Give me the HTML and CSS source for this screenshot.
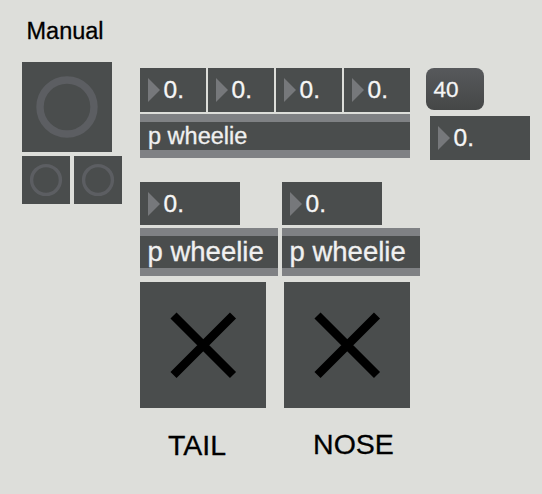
FILE: index.html
```html
<!DOCTYPE html>
<html>
<head>
<meta charset="utf-8">
<link rel="stylesheet" href="styles.css">
</head>
<body>
<div class="patch">
  <div class="left">
    <div class="manual">Manual</div>
    <div class="knob knob-big">
      <svg width="90" height="90" viewBox="0 0 90 90"><circle cx="45" cy="45" r="27" fill="none" stroke="#5c5e62" stroke-width="7.4"/></svg>
    </div>
    <div class="knob-row">
      <div class="knob knob-small">
        <svg width="48" height="48" viewBox="0 0 48 48"><circle cx="24" cy="24" r="14.4" fill="none" stroke="#5c5e62" stroke-width="3.4"/></svg>
      </div>
      <div class="knob knob-small">
        <svg width="48" height="48" viewBox="0 0 48 48"><circle cx="24" cy="24" r="14.4" fill="none" stroke="#5c5e62" stroke-width="3.4"/></svg>
      </div>
    </div>
  </div>

  <div class="right">
    <div class="row row-a">
      <div class="nums4">
        <div class="num n-top"><span class="tri"></span><span class="val">0.</span></div>
        <div class="num n-top"><span class="tri"></span><span class="val">0.</span></div>
        <div class="num n-top"><span class="tri"></span><span class="val">0.</span></div>
        <div class="num n-top"><span class="tri"></span><span class="val">0.</span></div>
      </div>
      <div class="msg">40</div>
    </div>

    <div class="row row-b">
      <div class="sub sub-wide"><div class="sub-body">p wheelie</div></div>
      <div class="num n-side"><span class="tri"></span><span class="val">0.</span></div>
    </div>

    <div class="row row-c">
      <div class="num n-low"><span class="tri"></span><span class="val">0.</span></div>
      <div class="num n-low"><span class="tri"></span><span class="val">0.</span></div>
    </div>

    <div class="row row-d">
      <div class="sub sub-big"><div class="sub-body">p wheelie</div></div>
      <div class="sub sub-big"><div class="sub-body">p wheelie</div></div>
    </div>

    <div class="row row-e">
      <div class="xbox">
        <svg width="126" height="126" viewBox="0 0 126 126"><path d="M33.5 33.5 L93 93 M93 33.5 L33.5 93" stroke="#000" stroke-width="8.6" fill="none"/></svg>
      </div>
      <div class="xbox">
        <svg width="126" height="126" viewBox="0 0 126 126"><path d="M33.5 33.5 L93 93 M93 33.5 L33.5 93" stroke="#000" stroke-width="8.6" fill="none"/></svg>
      </div>
    </div>

    <div class="row row-f">
      <span class="lbl lbl-tail">TAIL</span>
      <span class="lbl lbl-nose">NOSE</span>
    </div>
  </div>
</div>
</body>
</html>
```

FILE: styles.css
```css
html, body {
  margin: 0;
  padding: 0;
}
body {
  background: #dddeda;
  font-family: "Liberation Sans", Arial, sans-serif;
  width: 542px;
  height: 494px;
  overflow: hidden;
}
.patch {
  display: flex;
  align-items: flex-start;
  gap: 18px;
  padding-left: 22px;
}
.left {
  width: 100px;
  display: flex;
  flex-direction: column;
}
.manual {
  font-size: 23.5px;
  line-height: 26px;
  height: 26px;
  margin: 18px 0 0 4.5px;
  color: #000;
  -webkit-text-stroke: 0.3px #000;
}
.knob {
  background: #4a4d4d;
  display: flex;
}
.knob-big {
  width: 90px;
  height: 90px;
  margin-top: 18px;
}
.knob-row {
  display: flex;
  gap: 4px;
  margin-top: 4px;
}
.knob-small {
  width: 48px;
  height: 48px;
}
.right {
  display: flex;
  flex-direction: column;
  width: 400px;
}
.row {
  display: flex;
  align-items: flex-start;
}
.row-a {
  margin-top: 68px;
}
.nums4 {
  display: flex;
  gap: 2px;
}
.num {
  background: #4a4d4d;
  display: flex;
  align-items: center;
  color: #f6f6f6;
  box-sizing: border-box;
}
.tri {
  width: 0;
  height: 0;
  border-left: 12px solid #76787b;
  border-top: 12px solid transparent;
  border-bottom: 12px solid transparent;
  margin-left: 8px;
  flex: none;
}
.val {
  font-size: 24.5px;
  line-height: 44px;
  margin-left: 3.5px;
  -webkit-text-stroke: 0.3px #f6f6f6;
}
.n-top {
  width: 66px;
  height: 44px;
}
.msg {
  margin-left: 16px;
  width: 58px;
  height: 42px;
  border-radius: 8px;
  background: linear-gradient(#57595c, #454747);
  color: #f6f6f6;
  font-size: 22.5px;
  line-height: 44px;
  padding-left: 7.5px;
  box-sizing: border-box;
  -webkit-text-stroke: 0.3px #f6f6f6;
}
.row-b {
  margin-top: 2px;
}
.sub {
  background: #7f8184;
  padding: 8px 0;
  box-sizing: border-box;
}
.sub-body {
  background: #4a4d4d;
  color: #f0f0f0;
  padding-left: 8px;
  -webkit-text-stroke: 0.3px #f0f0f0;
  white-space: nowrap;
  overflow: hidden;
}
.sub-wide {
  width: 270px;
}
.sub-wide .sub-body {
  font-size: 23.5px;
  line-height: 28px;
  height: 28px;
}
.n-side {
  width: 100px;
  height: 44px;
  margin-left: 20px;
  margin-top: 2px;
}
.row-c {
  margin-top: 22px;
  gap: 42px;
}
.n-low {
  width: 100px;
  height: 43px;
}
.row-d {
  margin-top: 3px;
  gap: 4px;
}
.sub-big {
  width: 138px;
}
.sub-big .sub-body {
  font-size: 27.5px;
  line-height: 32px;
  height: 32px;
  padding-left: 7.5px;
}
.row-e {
  margin-top: 6px;
  gap: 18px;
}
.xbox {
  width: 126px;
  height: 126px;
  background: #4a4d4d;
  display: flex;
}
.row-f {
  margin-top: 21px;
}
.lbl {
  font-size: 28.5px;
  line-height: 32px;
  color: #000;
  -webkit-text-stroke: 0.3px #000;
}
.lbl-tail {
  margin-left: 28px;
}
.lbl-nose {
  margin-left: 87px;
  position: relative;
  top: -1px;
}
```
